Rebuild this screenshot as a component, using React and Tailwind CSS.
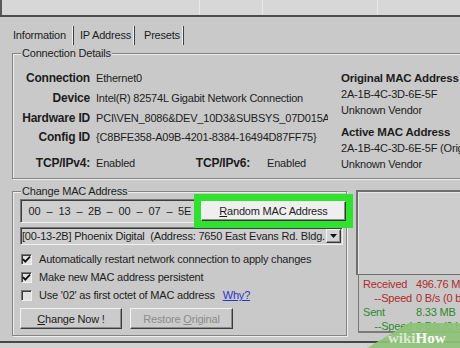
import React from 'react';

const sunken =
  'border border-t-[#767676] border-l-[#767676] border-b-[#f0f0f0] border-r-[#f0f0f0] shadow-[inset_1px_1px_0_#3e3e3e]';
const raised =
  'border border-t-[#f2f2f2] border-l-[#f2f2f2] border-b-[#3a3a3a] border-r-[#3a3a3a] shadow-[inset_-1px_-1px_0_#8c8c8c]';
const etched = 'border-[#838383] shadow-[inset_1px_1px_0_#ededed,1px_1px_0_#ededed]';

function InfoRow({ label, value, className = '' }) {
  return (
    <div className={`flex h-[19px] items-center whitespace-nowrap ${className}`}>
      <span className="w-[77px] shrink-0 text-right text-[12px] font-bold">{label}</span>
      <span className="ml-[6px]">{value}</span>
    </div>
  );
}

function Checkbox({ checked, children }) {
  return (
    <div className="flex h-[18px] items-center">
      <span className={`ml-[1px] flex h-[11px] w-[11px] items-center justify-center bg-[#e2e2e2] ${sunken}`}>
        {checked && (
          <svg width="9" height="9" viewBox="0 0 9 9">
            <path d="M1 4.2 L3.3 6.6 L8 1.6" fill="none" stroke="#111" strokeWidth="1.8" />
          </svg>
        )}
      </span>
      <span className="ml-[7px] whitespace-nowrap">{children}</span>
    </div>
  );
}

export default function App() {
  const mac = ['00', '13', '2B', '00', '07', '5E'];

  return (
    <div className="relative h-[348px] w-[460px] overflow-hidden whitespace-nowrap bg-[#c9c9c9] font-['Liberation_Sans',Arial,sans-serif] text-[11px] leading-[14px] tracking-[-0.2px] text-[#1d1d1d]">
      {/* window strip */}
      <div className="flex h-[17px] border-b-2 border-[#4c4c4c] bg-[#d7d7d7]">
        <div className="w-[200px] border-l-2 border-r border-l-[#5a5a5a] border-r-[#e8e8e8]" />
        <div className="w-[63px] border-r border-[#e8e8e8]" />
        <div className="w-[115px] border-r border-[#e8e8e8]" />
      </div>

      {/* tabs */}
      <div className="flex h-[36px] items-center">
        <span className="ml-[13px] w-[59px]">Information</span>
        <i className="h-[19px] w-[2px] border-r border-[#3f3f3f] bg-[#f0f0f0]" />
        <span className="ml-[6px] w-[53px]">IP Address</span>
        <i className="h-[19px] w-[2px] border-r border-[#3f3f3f] bg-[#f0f0f0]" />
        <span className="ml-[9px] w-[38px]">Presets</span>
        <i className="h-[19px] w-[2px] border-r border-[#3f3f3f] bg-[#f0f0f0]" />
      </div>

      {/* Connection Details */}
      <div className={`relative ml-[12px] h-[126px] border-t border-l border-b ${etched}`}>
        <span className="absolute -top-[8px] left-[8px] bg-[#c9c9c9] px-[1px]">Connection Details</span>
        <div className="flex pt-[14px]">
          <div className="w-[315px] shrink-0 overflow-hidden">
            <InfoRow label="Connection" value="Ethernet0" className="h-[20px]" />
            <InfoRow label="Device" value="Intel(R) 82574L Gigabit Network Connection" className="h-[20px]" />
            <InfoRow label="Hardware ID" value="PCI\VEN_8086&DEV_10D3&SUBSYS_07D015A0" />
            <InfoRow label="Config ID" value="{C8BFE358-A09B-4201-8384-16494D87FF75}" />
            <div className="mt-[7px] flex h-[20px] items-center">
              <span className="w-[77px] shrink-0 text-right text-[12px] font-bold">TCP/IPv4:</span>
              <span className="ml-[6px] w-[60px]">Enabled</span>
              <span className="w-[94px] text-right text-[12px] font-bold">TCP/IPv6:</span>
              <span className="ml-[17px]">Enabled</span>
            </div>
          </div>
          <div className="ml-[13px] pt-[2px] leading-[16px]">
            <div className="text-[11.5px] font-bold">Original MAC Address</div>
            <div>2A-1B-4C-3D-6E-5F</div>
            <div>Unknown Vendor</div>
            <div className="mt-[6px] text-[11.5px] font-bold">Active MAC Address</div>
            <div>2A-1B-4C-3D-6E-5F (Original)</div>
            <div>Unknown Vendor</div>
          </div>
        </div>
      </div>

      {/* lower area */}
      <div className="mt-[11px] flex items-start">
        <div className={`relative ml-[12px] mt-[1px] h-[145px] w-[337px] border ${etched} pl-[7px] pt-[7px]`}>
          <span className="absolute -top-[8px] left-[8px] bg-[#c9c9c9] px-[1px]">Change MAC Address</span>

          <div className="flex h-[24px] items-center">
            <div className={`flex h-[24px] w-[179px] items-center bg-[#cfcfcf] pl-[7px] ${sunken}`}>
              {mac.map((m, i) => (
                <React.Fragment key={i}>
                  {i > 0 && <span className="w-[17px] text-center">–</span>}
                  <span className="w-[13px] text-center">{m}</span>
                </React.Fragment>
              ))}
            </div>
            <button
              className={`ml-[2px] h-[20px] w-[145px] bg-[#efefef] text-center outline-[7px] outline-solid outline-[#2fe22f] ${raised}`}
            >
              <span className="underline">R</span>andom MAC Address
            </button>
          </div>

          <div className={`mt-[4px] flex h-[18px] w-[323px] items-center bg-[#cfcfcf] ${sunken}`}>
            <span className="w-[305px] overflow-hidden pl-[1px]">
              [00-13-2B] Phoenix Digital&nbsp;&nbsp;(Address: 7650 East Evans Rd. Bldg. A, Suite 150)
            </span>
            <span className={`ml-auto mr-[1px] flex h-[14px] w-[15px] items-center justify-center bg-[#d4d4d4] ${raised}`}>
              <svg width="7" height="4" viewBox="0 0 7 4">
                <path d="M0 0 H7 L3.5 4 Z" fill="#111" />
              </svg>
            </span>
          </div>

          <div className="mt-[5px]">
            <Checkbox checked>Automatically restart network connection to apply changes</Checkbox>
            <Checkbox checked>Make new MAC address persistent</Checkbox>
            <Checkbox>
              Use '02' as first octet of MAC address
              <span className="ml-[8px] text-[#2a36c8] underline">Why?</span>
            </Checkbox>
          </div>

          <div className="mt-[4px] flex gap-[8px]">
            <button className={`h-[21px] w-[102px] bg-[#cbcbcb] ${raised}`}>
              <span className="underline">C</span>hange Now !
            </button>
            <button className={`h-[21px] w-[103px] bg-[#cbcbcb] text-[#8c8c8c] ${raised}`}>
              Restore <span className="underline">O</span>riginal
            </button>
          </div>
        </div>

        {/* status panel */}
        <div className="ml-[9px] flex-1">
          <div className="h-[85px] border-t-2 border-l-2 border-b border-t-[#6e6e6e] border-l-[#6e6e6e] border-b-[#6e6e6e] bg-[#cdcdcd] shadow-[inset_1px_1px_0_#e6e6e6]" />
          <div className="ml-[2px] h-[58px] border-l border-b-2 border-[#7a7a7a] pl-[4px] pt-[2px]">
            <div className="flex text-[#b02a2a]">
              <span className="w-[49px]">Received</span>
              <span className="ml-[4px]">496.76 MB</span>
            </div>
            <div className="flex text-[#b02a2a]">
              <span className="w-[49px] text-right">--Speed</span>
              <span className="ml-[4px]">0 B/s (0 b/s)</span>
            </div>
            <div className="flex text-[#2b8a2b]">
              <span className="w-[49px]">Sent</span>
              <span className="ml-[4px]">8.33 MB</span>
            </div>
            <div className="flex text-[#2b8a2b]">
              <span className="w-[49px] text-right">--Speed</span>
              <span className="ml-[4px]">0 B/s (0 b/s)</span>
            </div>
          </div>
        </div>
      </div>

      {/* bottom edge */}
      <div className="mt-[5px] h-[2px] bg-[#474747]" />
      <div className="h-[6px] bg-[#d2d2d2]" />

      {/* wikiHow mark */}
      <div className="absolute bottom-0 right-0 h-[27px] w-[95px]">
        <svg className="absolute inset-0" width="95" height="27" viewBox="0 0 95 27">
          <polygon points="2,27 44,2 95,2 95,27" fill="#8fc27a" fillOpacity="0.92" />
        </svg>
        <span className="absolute left-[23px] top-[10px] font-['Liberation_Serif',serif] text-[15px] font-bold leading-[15px] tracking-normal">
          <span className="text-[#dbe9d2]">wiki</span>
          <span className="text-white">How</span>
        </span>
      </div>
    </div>
  );
}
